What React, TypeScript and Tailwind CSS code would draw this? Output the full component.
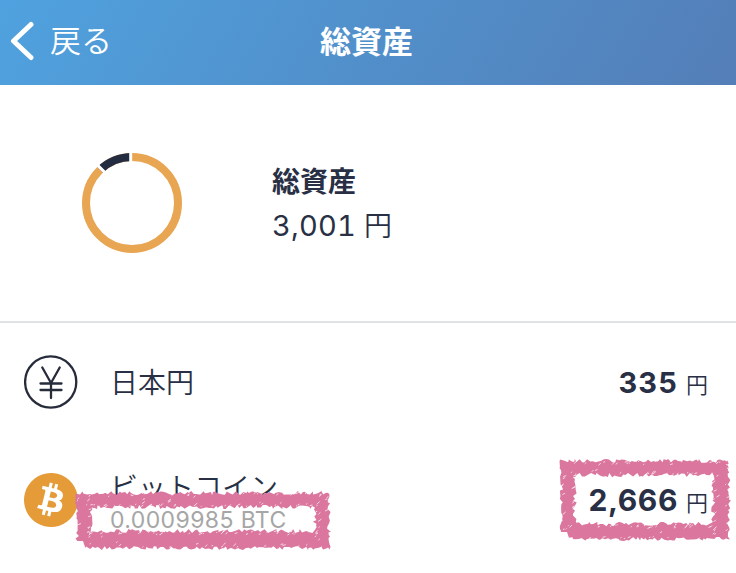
import { SiBitcoin } from "react-icons/si";

type Box = { l: number; t: number; r: number; b: number };

// Small deterministic generator so that the chalk texture is stable.
function makeRandom(seed: number) {
  let s = seed;
  return () => {
    s = (s * 16807) % 2147483647;
    return s / 2147483647;
  };
}

function roughRing(box: Box, rough: number, rnd: () => number) {
  const pts: string[] = [];
  const push = (x: number, y: number) => pts.push(`${x.toFixed(1)} ${y.toFixed(1)}`);
  const j = () => (rnd() - 0.5) * 2 * rough;
  for (let x = box.l; x < box.r; x += 1.4 + rnd() * 2) push(x + j() * 0.4, box.t + j());
  for (let y = box.t; y < box.b; y += 1.4 + rnd() * 2) push(box.r + j(), y + j() * 0.4);
  for (let x = box.r; x > box.l; x -= 1.4 + rnd() * 2) push(x + j() * 0.4, box.b + j());
  for (let y = box.b; y > box.t; y -= 1.4 + rnd() * 2) push(box.l + j(), y + j() * 0.4);
  return `M${pts.join("L")}Z`;
}

function ChalkFrame({ w, h, inner, seed, className }: { w: number; h: number; inner: Box; seed: number; className: string }) {
  const rnd = makeRandom(seed);
  const outer = { l: 2, t: 2, r: w - 2, b: h - 2 };
  const ring = roughRing(outer, 2, rnd) + roughRing(inner, 2.2, rnd);
  let flecks = "";
  const fleck = (x: number, y: number) => {
    const len = 0.3 + rnd() * rnd() * 3;
    flecks += `M${x.toFixed(1)} ${y.toFixed(1)}l${len.toFixed(1)} ${(-len * (0.2 + rnd() * 0.9)).toFixed(1)}`;
  };
  // Flecks gather close to both edges of a band and thin out towards its middle.
  const near = (a: number, b: number, share: number) => {
    const d = rnd() * rnd() * 6 + 0.5;
    return rnd() < share ? a + d : b - d;
  };
  for (let i = 0; i < w * 0.22; i++) {
    fleck(4 + rnd() * (w - 10), near(outer.t, inner.t, 0.3));
    fleck(8 + rnd() * (w - 14), near(inner.b, outer.b, 0.7));
  }
  for (let i = 0; i < h * 0.24; i++) {
    fleck(near(outer.l, inner.l, 0.4) - 0.5, 4 + rnd() * (h - 10));
    fleck(near(inner.r, outer.r, 0.6) - 0.5, 4 + rnd() * (h - 10));
  }
  return (
    <svg className={className} width={w} height={h} viewBox={`0 0 ${w} ${h}`}>
      <path d={ring} fill="#db779e" fillRule="evenodd" />
      <path d={flecks} stroke="#fff" strokeOpacity="0.9" strokeWidth="0.8" strokeLinecap="round" fill="none" />
      <path d={`M0 ${h - 9}h8l3 9H0Z`} fill="#fff" />
    </svg>
  );
}

function Donut() {
  return (
    <svg width="104" height="104" viewBox="0 0 104 104" fill="none" strokeWidth="8">
      <circle cx="52" cy="52" r="46" stroke="#e8a552" />
      <path d="M52 6A46 46 0 0 0 20.2 18.8" stroke="#232c41" />
      <path d="M50.7 0v13M17 13.6l10 10" stroke="#fff" strokeWidth="3" />
    </svg>
  );
}

function YenIcon() {
  return (
    <svg width="54" height="54" viewBox="0 0 54 54" fill="none" stroke="#272c3b" strokeWidth="2.3" strokeLinecap="round">
      <circle cx="26.7" cy="27" r="25.6" />
      <path d="M18.3 12.5 27 28 35.7 12.5M27 28v15M16.5 28.5h21M16.5 35h21" />
    </svg>
  );
}

export default function App() {
  return (
    <div className="flex h-[573px] w-[736px] flex-col overflow-hidden bg-white font-['Inter','Noto_Sans_CJK_JP',sans-serif] text-[#293045]">
      <header className="grid h-[85px] shrink-0 grid-cols-3 items-center bg-[linear-gradient(120deg,#4fa2df_0%,#5190cb_48%,#547eb7_100%)] text-white">
        <div className="flex items-center pb-[3px] pl-[9px]">
          <svg width="26" height="40" viewBox="0 0 26 40" fill="none" stroke="currentColor" strokeWidth="5" strokeLinecap="round" strokeLinejoin="round">
            <path d="M22 3.5 4.5 20 22 36.5" />
          </svg>
          <span className="ml-[15px] text-[31px] leading-10 font-[350]">戻る</span>
        </div>
        <h1 className="pr-[3px] pb-0.5 text-center text-[31px] leading-10 font-bold">総資産</h1>
      </header>

      <section className="flex h-[238px] shrink-0 items-center border-b-2 border-[#e1e2e3] pl-20">
        <Donut />
        <div className="ml-[88px] flex flex-col pt-0.5">
          <h2 className="text-[28px] leading-[44px] font-bold">総資産</h2>
          <p className="flex items-baseline gap-2 text-[29px] leading-[43px]">
            <span className="tracking-[0.2px] tabular-nums">3,001</span>
            <span className="text-[28px] font-[350]">円</span>
          </p>
        </div>
      </section>

      <section className="flex h-[118px] shrink-0 items-center pr-7 pl-6">
        <YenIcon />
        <span className="ml-8 pt-0.5 text-[28px] font-[350]">日本円</span>
        <div className="ml-auto flex items-baseline gap-2 pt-px">
          <span className="text-[29px] font-bold tracking-[1.2px]">335</span>
          <span className="text-[22px] font-[350]">円</span>
        </div>
      </section>

      <section className="relative flex h-[118px] shrink-0 items-center pr-7 pl-6">
        <SiBitcoin size={54} color="#e49b38" />
        <div className="ml-8 flex flex-col pt-[3px]">
          <span className="text-[28px] leading-[38px] font-[350]">ビットコイン</span>
          <span className="relative z-10 -mt-[2px] text-[23px] leading-[30px] font-normal tracking-[0.4px] text-[#a6a6a6]">0.0009985 BTC</span>
        </div>
        <div className="relative z-10 ml-auto flex items-baseline gap-2 pt-px">
          <span className="text-[30px] font-bold tracking-[0.6px]">2,666</span>
          <span className="text-[22px] font-[350]">円</span>
        </div>
        <ChalkFrame w={256} h={59} seed={4711} inner={{ l: 16, t: 16, r: 240, b: 40 }} className="absolute top-[50px] left-[75px]" />
        <ChalkFrame w={172} h={82} seed={913} inner={{ l: 16, t: 16, r: 154, b: 65 }} className="absolute top-[18px] left-[559px]" />
      </section>
    </div>
  );
}
